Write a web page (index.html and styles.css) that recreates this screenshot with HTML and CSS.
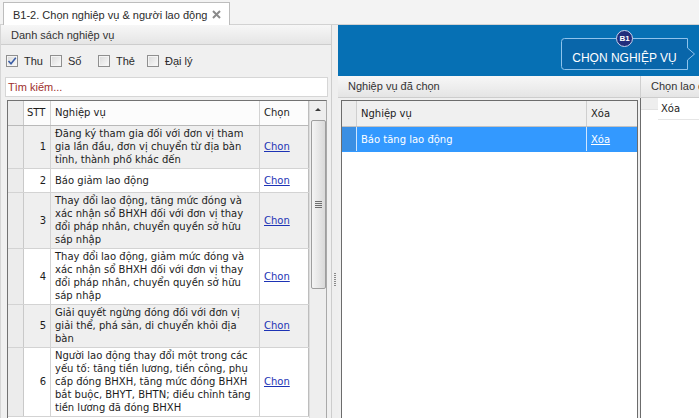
FILE: index.html
```html
<!DOCTYPE html>
<html lang="vi">
<head>
<meta charset="utf-8">
<title>B1-2. Chọn nghiệp vụ &amp; người lao động</title>
<link rel="stylesheet" href="styles.css">
</head>
<body>
<div class="tabstrip">
  <div class="tab">
    <span class="tab-title">B1-2. Chọn nghiệp vụ &amp; người lao động</span>
    <svg class="tab-close" width="9" height="9" viewBox="0 0 9 9"><path d="M1 1L8 8M8 1L1 8" stroke="#8a8a8a" stroke-width="2"/></svg>
  </div>
</div>
<div class="main">
  <section class="left">
    <div class="phead">Danh sách nghiệp vụ</div>
    <div class="filters">
      <label class="cb cb-1"><span class="box"><svg width="10" height="10" viewBox="0 0 10 10"><path d="M1.5 5L4 7.8L8.8 1.8" fill="none" stroke="#3b5ea6" stroke-width="1.6"/></svg></span>Thu</label>
      <label class="cb cb-2"><span class="box"></span>Số</label>
      <label class="cb cb-3"><span class="box"></span>Thẻ</label>
      <label class="cb"><span class="box"></span>Đại lý</label>
    </div>
    <div class="search">Tìm kiếm...</div>
    <div class="gridwrap">
      <div class="grid">
        <div class="row head">
          <div class="c ind"></div>
          <div class="c stt">STT</div>
          <div class="c nv">Nghiệp vụ</div>
          <div class="c ch">Chọn</div>
        </div>
        <div class="row alt">
          <div class="c ind"></div>
          <div class="c stt num">1</div>
          <div class="c nv">Đăng ký tham gia đối với đơn vị tham<br>gia lần đầu, đơn vị chuyển từ địa bàn<br>tỉnh, thành phố khác đến</div>
          <div class="c ch"><a class="lnk">Chon</a></div>
        </div>
        <div class="row single">
          <div class="c ind"></div>
          <div class="c stt num">2</div>
          <div class="c nv">Báo giảm lao động</div>
          <div class="c ch"><a class="lnk">Chon</a></div>
        </div>
        <div class="row alt">
          <div class="c ind"></div>
          <div class="c stt num">3</div>
          <div class="c nv">Thay đổi lao động, tăng mức đóng và<br>xác nhận sổ BHXH đối với đơn vị thay<br>đổi pháp nhân, chuyển quyền sở hữu<br>sáp nhập</div>
          <div class="c ch"><a class="lnk">Chon</a></div>
        </div>
        <div class="row">
          <div class="c ind"></div>
          <div class="c stt num">4</div>
          <div class="c nv">Thay đổi lao động, giảm mức đóng và<br>xác nhận sổ BHXH đối với đơn vị thay<br>đổi pháp nhân, chuyển quyền sở hữu<br>sáp nhập</div>
          <div class="c ch"><a class="lnk">Chon</a></div>
        </div>
        <div class="row alt">
          <div class="c ind"></div>
          <div class="c stt num">5</div>
          <div class="c nv">Giải quyết ngừng đóng đối với đơn vị<br>giải thể, phá sản, di chuyển khỏi địa<br>bàn</div>
          <div class="c ch"><a class="lnk">Chon</a></div>
        </div>
        <div class="row">
          <div class="c ind"></div>
          <div class="c stt num">6</div>
          <div class="c nv">Người lao động thay đổi một trong các<br>yếu tố: tăng tiền lương, tiền công, phụ<br>cấp đóng BHXH, tăng mức đóng BHXH<br>bắt buộc, BHYT, BHTN; điều chỉnh tăng<br>tiền lương đã đóng BHXH</div>
          <div class="c ch"><a class="lnk">Chon</a></div>
        </div>
      </div>
      <div class="vscroll">
        <div class="arrow-up"></div>
        <div class="thumb"><span class="grip"></span></div>
      </div>
    </div>
  </section>
  <div class="splitter"><span class="split-grip"></span></div>
  <section class="right">
    <div class="banner">
      <div class="step">
        <svg class="step-frame" width="136" height="32" viewBox="0 0 136 32"><path d="M3.5 .5H126.5V10L133.5 16L126.5 22V31.5H3.5A3 3 0 0 1 .5 28.5V3.5A3 3 0 0 1 3.5 .5Z" fill="#0966aa" stroke="#8fc3ec"/></svg>
        <span class="step-badge">B1</span>
        <span class="step-label">CHỌN NGHIỆP VỤ</span>
      </div>
    </div>
    <div class="panels">
      <div class="mid">
        <div class="phead ph2">Nghiệp vụ đã chọn</div>
        <div class="mgrid">
          <div class="mrow mhead">
            <div class="mc mind"></div>
            <div class="mc mnv">Nghiệp vụ</div>
            <div class="mc mx">Xóa</div>
          </div>
          <div class="mrow sel">
            <div class="mc mind"></div>
            <div class="mc mnv">Báo tăng lao động</div>
            <div class="mc mx"><a class="lnk-w">Xóa</a></div>
          </div>
        </div>
      </div>
      <div class="far">
        <div class="phead ph3">Chọn lao đ</div>
        <div class="fgrid">
          <div class="fhead">
            <div class="find"></div>
            <div class="fx">Xóa</div>
          </div>
        </div>
      </div>
    </div>
  </section>
</div>
</body>
</html>
```

FILE: styles.css
```css
* { box-sizing: border-box; }
html, body { margin: 0; padding: 0; }
body {
  width: 699px; height: 418px; overflow: hidden;
  background: #f2f2f2;
  font-family: "Liberation Sans", Arial, sans-serif;
  font-size: 11px; color: #262626;
}

/* tab strip */
.tabstrip { height: 25px; padding: 2px 0 0 3px; background: #f3f3f3; border-bottom: 1px solid #d2d2d2; display: flex; }
.tab {
  width: 227px; height: 24px; background: #fff;
  border: 1px solid #bdbdbd; border-bottom: none;
  display: flex; align-items: center; padding-left: 9px;
  color: #2b2b2b;
}
.tab-close { margin-left: auto; margin-right: 8px; }

.main { display: flex; height: 393px; }

/* left panel */
.left {
  width: 332px; flex: none; background: #f0f0f0;
  border-left: 1px solid #d6d6d6; border-right: 1px solid #cdcdcd;
  display: flex; flex-direction: column;
}
.phead {
  height: 20px; line-height: 20px; padding-left: 10px;
  background: linear-gradient(#f7f7f7, #e5e5e5);
  border-bottom: 1px solid #cdcdcd; color: #333;
  white-space: nowrap; overflow: hidden;
}
.filters { height: 31px; display: flex; align-items: center; padding-left: 5px; }
.cb { display: flex; align-items: center; gap: 6px; color: #2a2a2a; }
.cb-1 { width: 44px; }
.cb-2 { width: 48px; }
.cb-3 { width: 49px; }
.box {
  width: 12px; height: 12px; border: 1px solid #8f8f8f;
  background: linear-gradient(135deg, #d9d9d9, #fbfbfb);
  box-shadow: inset 0 0 0 1px #f4f4f4;
  display: flex; align-items: center; justify-content: center;
}
.search {
  height: 20px; margin: 1px 3px 0 4px; background: #fff;
  border: 1px solid #d6d6d6; line-height: 18px; padding-left: 2px;
  color: #a0302c;
}
.gridwrap {
  flex: 1; min-height: 0; margin: 3px 4px 0 6px;
  border: 1px solid #727272; border-right-color: #a9a9a9; border-bottom: none;
  display: flex; background: #fff; overflow: hidden;
}
.grid {
  width: 301px; flex: none;
  font-family: "DejaVu Sans", Verdana, sans-serif; font-size: 10px; line-height: 13px; color: #1c1c1c;
}
.row { display: flex; border-bottom: 1px solid #d3d3d3; background: #fff; }
.row.alt { background: #efefef; }
.row.single { min-height: 24px; }
.row.head { height: 25px; background: #fcfcfc; border-bottom-color: #b9b9b9; }
.c { display: flex; align-items: center; border-right: 1px solid #d3d3d3; padding: 1px 4px 2px; white-space: nowrap; }
.ind { width: 16px; background: #ececec; border-right-color: #c9c9c9; padding: 0; }
.stt { width: 27px; padding-left: 3px; }
.num { justify-content: flex-end; padding-right: 4px; }
.nv { width: 209px; }
.ch { width: 49px; border-right-color: #bdbdbd; }
.lnk { color: #1d33b5; text-decoration: underline; }

/* scrollbar */
.vscroll { width: 17px; flex: none; background: #eeeeee; border-left: 1px solid #dcdcdc; }
.arrow-up {
  width: 0; height: 0; margin: 7px auto 0;
  border-left: 3px solid transparent; border-right: 3px solid transparent; border-bottom: 3px solid #3a3a3a;
}
.thumb {
  width: 15px; height: 169px; margin: 9px 0 0 1px;
  border: 1px solid #9e9e9e; border-radius: 2px;
  background: linear-gradient(to right, #f4f4f4, #d9d9d9);
  display: flex; align-items: center; justify-content: center;
}
.grip {
  width: 7px; height: 7px;
  background: repeating-linear-gradient(#6e6e6e 0 1px, transparent 1px 2px);
}

/* splitter */
.splitter { width: 6px; flex: none; background: #efefef; display: flex; align-items: center; justify-content: center; }
.split-grip {
  width: 2px; height: 14px; margin-top: 117px;
  background: repeating-linear-gradient(#8a8a8a 0 1px, transparent 1px 2px);
}

/* right area */
.right { flex: 1; min-width: 0; display: flex; flex-direction: column; }
.banner {
  height: 51px; background: #0670b4;
  display: flex; justify-content: flex-end; align-items: flex-end;
  padding: 0 2px 6px 0;
}
.step { position: relative; width: 136px; height: 32px; }
.step-frame { position: absolute; left: 0; top: 0; }
.step-label {
  position: relative; display: block; width: 127px; text-align: center;
  padding-top: 13px; line-height: 14px; font-size: 12px; color: #fff;
}
.step-badge {
  position: absolute; left: 55px; top: -8px; width: 17px; height: 17px;
  border-radius: 50%; background: #222e7c; border: 1px solid #c9d3ee;
  color: #fff; font-size: 8px; font-weight: bold; line-height: 15px; text-align: center;
}

.panels { flex: 1; display: flex; min-height: 0; }
.ph2, .ph3 { height: 22px; line-height: 21px; }
.mid { width: 302px; flex: none; display: flex; flex-direction: column; background: #f0f0f0; }
.mgrid {
  flex: 1; margin: 2px 2px 0 3px; background: #fff;
  border: 1px solid #6c6c6c; border-bottom: none;
  font-family: "DejaVu Sans", Verdana, sans-serif; font-size: 10px; color: #1c1c1c;
}
.mrow { display: flex; height: 25px; border-bottom: 1px solid #d3d3d3; }
.mhead { height: 26px; background: #f0f0f0; border-bottom-color: #c2c2c2; }
.mc { display: flex; align-items: center; border-right: 1px solid #cfcfcf; padding-left: 4px; white-space: nowrap; }
.mind { width: 15px; padding: 0; background: #ececec; }
.mnv { width: 230px; }
.mx { width: 50px; border-right: none; }
.sel { background: #3399ff; color: #fff; border-bottom-color: #3399ff; }
.sel .mind { background: #3b8fe3; }
.sel .mc { border-right-color: #cfe6ff; }
.lnk-w { color: #fff; text-decoration: underline; }

.far { flex: 1; min-width: 0; display: flex; flex-direction: column; background: #f0f0f0; }
.ph3 { border-left: 1px solid #cfcfcf; padding-left: 10px; }
.fgrid { flex: 1; background: #fff; border-left: 1px solid #6c6c6c; }
.fhead { display: flex; height: 22px; font-family: "DejaVu Sans", Verdana, sans-serif; font-size: 10px; color: #1c1c1c; }
.find { width: 17px; height: 12px; background: #eeeeee; border-bottom: 1px solid #e2e2e2; }
.fx { flex: 1; border-bottom: 1px solid #e6e6e6; padding-left: 3px; display: flex; align-items: center; }
```
